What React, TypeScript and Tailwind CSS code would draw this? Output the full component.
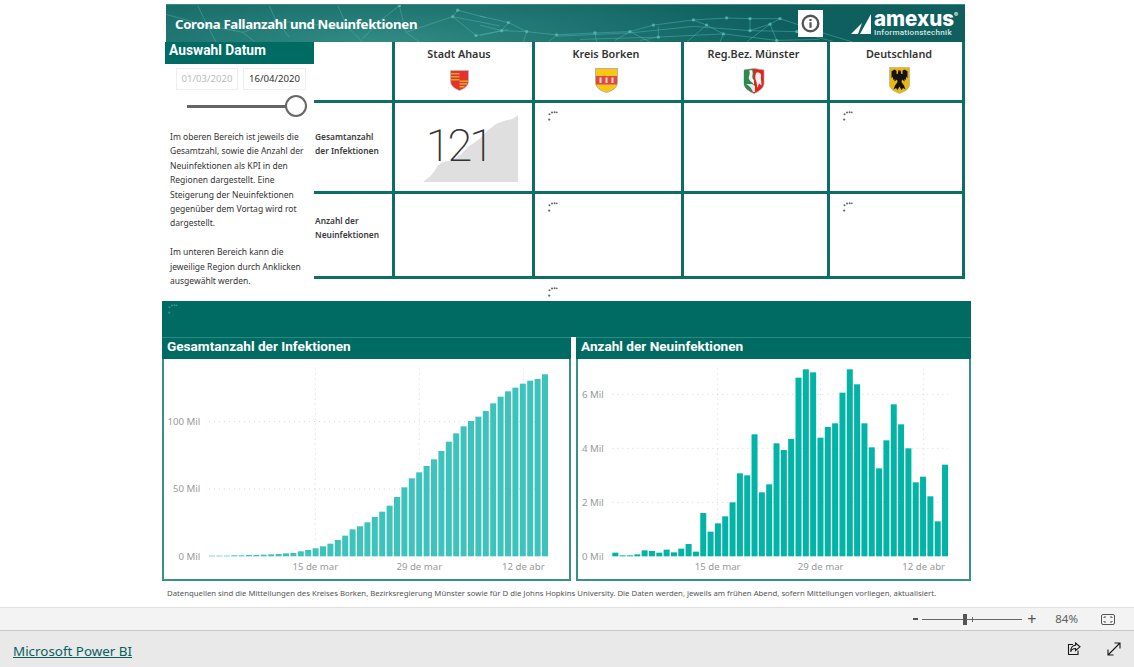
const TEAL = "#006b63";

// tops of the bars as read off the reference, baseline is 679 in the same units
const totalTops = [
  677, 677, 677, 676, 676, 675, 675, 674, 673, 672, 670, 669, 664, 660, 655, 649, 641, 630, 617, 598, 589, 577, 561,
  545, 527, 501, 472, 445, 427, 408, 388, 363, 335, 310, 289, 273, 260, 243, 220, 200, 184, 173, 161, 152, 147, 133,
];
const newTops = [
  668, 676, 676, 673, 661, 663, 668, 659, 667, 656, 642, 665, 549, 605, 580, 559, 517, 430, 436, 313, 487, 463, 340,
  360, 327, 143, 118, 127, 323, 291, 280, 188, 118, 163, 280, 352, 415, 331, 223, 283, 355, 457, 440, 499, 574, 404,
];

const networkLines = [
  "95,8 125,70 0,35",
  "125,70 230,90 330,55 310,8",
  "330,55 370,105",
  "125,70 150,120",
  "230,90 265,118",
  "515,8 545,75 590,120",
  "545,75 330,55",
  "700,8 635,60 590,110",
  "700,8 720,90 860,42 875,22 960,45",
  "860,42 930,100 1027,82",
  "860,42 1000,70",
  "720,90 760,120",
  "942,40 1027,60 1082,88 1172,98 1287,92 1392,88 1462,68 1582,52 1682,46 1752,48 1842,48 1892,65 1980,95 2060,120",
  "942,68 1007,85 1082,88",
  "1007,85 1027,60",
  "1007,85 942,100",
  "1082,88 1072,120",
  "1172,98 1147,120",
  "1287,92 1292,120",
  "1392,88 1452,120",
  "1392,88 1347,115",
  "1477,72 1477,105 1422,115",
  "1622,68 1562,120",
  "1622,68 1672,95 1662,120",
  "1752,48 1752,85 1812,65 1742,120",
  "1812,65 1832,115",
  "1842,48 1812,65",
  "1622,68 1582,52",
  "1172,102 1392,92 1582,72 1752,85 1892,88 2000,118",
  "1242,112 1477,105 1672,95 1832,115 1960,112",
];
const networkDots = [
  [125, 70], [330, 55], [545, 75], [700, 8], [860, 42], [875, 22], [930, 100], [1027, 60], [1007, 85], [1082, 88],
  [1172, 98], [1287, 92], [1392, 88], [1462, 68], [1477, 105], [1582, 52], [1622, 68], [1682, 46], [1672, 95],
  [1752, 85], [1752, 48], [1812, 65], [1842, 48], [1892, 88], [1832, 115],
];

const Network = () => (
  <svg className="absolute inset-0 w-full h-full" viewBox="0 6 2397 114" preserveAspectRatio="none" fill="none">
    {networkLines.map((pts) => (
      <polyline key={pts} points={pts} stroke="#4fb5ae" strokeOpacity="0.6" strokeWidth="2.5" />
    ))}
    {networkDots.map(([x, y]) => (
      <circle key={x + "-" + y} cx={x} cy={y} r="5" fill="#5fbdb6" fillOpacity="0.75" />
    ))}
  </svg>
);

const Logo = () => (
  <div className="flex items-center gap-[2px] mr-[7px]">
    <svg width="21" height="21" viewBox="0 0 21 21" className="mt-[2px]">
      <polygon points="0,20 11,9 7,20" fill="#fff" />
      <polygon points="9,20 20,0 20,20" fill="#fff" />
    </svg>
    <div className="flex flex-col text-white font-['Inter',sans-serif]">
      <div className="flex items-start h-[15px]">
        <span className="text-[20.5px] font-extrabold leading-[15px]">amexus</span>
        <span className="text-[6px] font-bold leading-[7px]">®</span>
      </div>
      <span className="text-[8.1px] font-medium leading-[9px] mt-[2px] text-[#d5e6e4] font-['Roboto',sans-serif] tracking-[0.25px]">
        Informationstechnik
      </span>
    </div>
  </div>
);

const InfoBox = () => (
  <div className="w-[25px] h-[27px] bg-white flex items-center justify-center">
    <svg width="19" height="19" viewBox="0 0 19 19" fill="none">
      <circle cx="9.5" cy="9.5" r="7.8" stroke="#555" strokeWidth="2.4" />
      <rect x="8.4" y="8.2" width="2.2" height="5.6" fill="#555" />
      <rect x="8.4" y="5" width="2.2" height="2" fill="#555" />
    </svg>
  </div>
);

const Dots = ({ color = "#666" }: { color?: string }) => (
  <svg width="10" height="10" viewBox="0 0 10 10" fill={color}>
    <circle cx="1.2" cy="8.6" r="1.1" />
    <circle cx="1.5" cy="3.2" r="1" />
    <circle cx="4" cy="1.5" r="1" />
    <circle cx="6.6" cy="1.3" r="1" />
    <circle cx="8.8" cy="1.3" r="0.9" />
  </svg>
);

const AhausShield = () => (
  <svg width="19" height="21" viewBox="0 0 19 21">
    <path d="M0.5 0.5H18.5V11C18.5 16 14 19 9.5 20.5C5 19 0.5 16 0.5 11Z" fill="#e3342b" stroke="#bbb" strokeWidth="0.7" />
    <rect x="1" y="3" width="8.5" height="1.5" fill="#d9a12b" />
    <rect x="1" y="6" width="8.5" height="1.5" fill="#d9a12b" />
    <rect x="1" y="9" width="8.5" height="1.5" fill="#d9a12b" />
    <rect x="9.5" y="10.5" width="8.5" height="1.4" fill="#e2b52d" />
    <rect x="9.5" y="13.2" width="7.5" height="1.4" fill="#e2b52d" />
    <rect x="9.5" y="16" width="5" height="1.4" fill="#e2b52d" />
  </svg>
);

const BorkenShield = () => (
  <svg width="23" height="25" viewBox="0 0 23 25">
    <path d="M0.5 0.5H22.5V14C22.5 20 17 23 11.5 24.5C6 23 0.5 20 0.5 14Z" fill="#fbc712" stroke="#999" strokeWidth="0.7" />
    <rect x="1" y="8" width="21" height="8.5" fill="#dc4a44" />
    <rect x="4.5" y="9.5" width="2" height="5.5" fill="#f2d6cf" />
    <rect x="10.5" y="9.5" width="2" height="5.5" fill="#f2d6cf" />
    <rect x="16.5" y="9.5" width="2" height="5.5" fill="#f2d6cf" />
  </svg>
);

const NrwShield = () => (
  <svg width="22" height="26" viewBox="0 0 22 26">
    <path d="M1 2L11 0.5L21 2V15C21 20 16 23.5 11 25.5C6 23.5 1 20 1 15Z" fill="#e2231a" stroke="#aaa" strokeWidth="0.7" />
    <path d="M1 2L10.5 1V18L9 24C5 22.5 1 19.5 1 15Z" fill="#2b8a4e" />
    <path d="M6 2.5C8 6 5 8 6 11C7 14 10 14 11 17V12C9.5 11 9 9.5 9.5 7C10 5 9.5 3 9 2Z" fill="#f1f1f1" />
    <path d="M3 16C5 17 8 19 10 24H12V18L9 16Z" fill="#e8e8e8" />
    <path d="M13 5C16 3.5 19 6 18 9C17.5 11 18.5 13 18.5 17.5L16 15.5L14.5 20L13.5 14C12 11 12 8 13 5Z" fill="#f1f1f1" />
  </svg>
);

const GermanyShield = () => (
  <svg width="21" height="27" viewBox="0 0 21 27">
    <path d="M0.5 0.5H20.5V18C20.5 22 15 25 10.5 26.5C6 25 0.5 22 0.5 18Z" fill="#e9b80e" stroke="#aaa" strokeWidth="0.6" />
    <path
      d="M9.3 3.5H11.7L12.3 7H13.5V3.8L15.5 2.6L18.5 4.2V11L17 10V13L15.5 12V14.5L13 12.5L12.5 15L15 18.5L16.5 22.5L14 21L12.5 23L10.5 19.5L8.5 23L7 21L4.5 22.5L6 18.5L8.5 15L8 12.5L5.5 14.5V12L4 13V10L2.5 11V4.2L5.5 2.6L7.5 3.8V7H8.7Z"
      fill="#141414"
    />
    <rect x="9.4" y="3" width="1.2" height="1.4" fill="#c8281e" />
  </svg>
);

type BarChartProps = {
  tops: number[];
  viewBox: string;
  width: number;
  color: string;
  x0: number;
  pitch: number;
  yTicks: { label: string; y: number }[];
  xTicks: { label: string; x: number }[];
  labelRight: number;
  gridRight: number;
};

const BarChart = ({ tops, viewBox, width, color, x0, pitch, yTicks, xTicks, labelRight, gridRight }: BarChartProps) => (
  <svg width={width} height="220" viewBox={viewBox} fontFamily="'Noto Sans', sans-serif" fontSize="29">
    {yTicks.map((t) => (
      <g key={t.label}>
        {t.y !== 679 && <line x1={x0} x2={gridRight} y1={t.y} y2={t.y} stroke="#ccc" strokeWidth="2.5" strokeDasharray="3 12" />}
        <text x={labelRight} y={t.y + 10} textAnchor="end" fill="#999">
          {t.label}
        </text>
      </g>
    ))}
    {xTicks.map((t) => (
      <g key={t.label}>
        <line x1={t.x} x2={t.x} y1="116" y2="679" stroke="#ccc" strokeWidth="2.5" strokeDasharray="3 12" />
        <text x={t.x} y="720" textAnchor="middle" fill="#999">
          {t.label}
        </text>
      </g>
    ))}
    {tops.map((top, i) => (
      <rect key={i} x={x0 + i * pitch} y={top} width="18" height={679 - top} fill={color} />
    ))}
  </svg>
);

const Cell = ({ children, className = "" }: { children?: React.ReactNode; className?: string }) => (
  <div className={"border-r-[3px] border-b-[3px] border-[#0d6e68] " + className}>{children}</div>
);

const HeadCell = ({ name, children, className = "" }: { name: string; children: React.ReactNode; className?: string }) => (
  <Cell className={"flex flex-col items-center " + className}>
    <span className="mt-[4px] text-[10.8px] leading-[16px] font-semibold text-[#333]">{name}</span>
    <div className="mt-[5px] h-[27px] flex items-center">{children}</div>
  </Cell>
);

const RowLabel = ({ children, className = "" }: { children: React.ReactNode; className?: string }) => (
  <Cell className={"flex items-center pl-[1px] text-[8.4px] leading-[14px] font-semibold text-[#3a3a3a] " + className}>
    <div>{children}</div>
  </Cell>
);

const DotCell = () => (
  <Cell className="pl-[13px] pt-[8px]">
    <Dots />
  </Cell>
);

const App = () => {
  return (
    <div className="w-full h-[667px] flex flex-col bg-white font-['Noto_Sans',sans-serif] overflow-hidden">
      <div className="h-[607px] w-[810px] mx-auto pt-[4px] flex flex-col shrink-0">
        {/* BANNER */}
        <div className="relative ml-[4px] w-[799px] h-[38px] shrink-0 overflow-hidden bg-[radial-gradient(ellipse_420px_70px_at_210px_100%,#318b84_0%,#0e5f5e_100%)] border-t border-[#3d8a85]">
          <Network />
          <div className="relative h-full flex items-center">
            <h1 className="ml-[9px] mt-[2px] text-[13.2px] tracking-[-0.3px] font-bold text-white whitespace-nowrap">
              Corona Fallanzahl und Neuinfektionen
            </h1>
            <div className="ml-auto flex items-center">
              <div className="mr-[28px]">
                <InfoBox />
              </div>
              <Logo />
            </div>
          </div>
        </div>

        <div className="flex h-[259px] shrink-0">
          {/* DATE SLICER */}
          <div className="ml-[3px] w-[149px] shrink-0">
            <div className="h-[22px] bg-[#006b63] pl-[4px] text-[13.8px] leading-[17px] font-bold text-white font-['Roboto',sans-serif]">
              Auswahl Datum
            </div>
            <div className="mt-[4px] ml-[11px] flex gap-[5px] text-[9.6px] leading-[20px] text-center">
              <div className="w-[62px] h-[22px] border border-[#eee] text-[#bbb]">01/03/2020</div>
              <div className="w-[63px] h-[22px] border border-[#eee] text-[#333]">16/04/2020</div>
            </div>
            <div className="mt-[5px] ml-[22px] w-[120px] h-[22px] flex items-center">
              <div className="flex-1 h-[3px] bg-[#666]" />
              <div className="w-[22px] h-[22px] rounded-full border-[2.5px] border-[#666] bg-white -ml-[1px]" />
            </div>
            <p className="mt-[13px] ml-[5px] text-[8.5px] leading-[14.4px] text-[#333] whitespace-nowrap">
              Im oberen Bereich ist jeweils die
              <br />
              Gesamtzahl, sowie die Anzahl der
              <br />
              Neuinfektionen als KPI in den
              <br />
              Regionen dargestellt. Eine
              <br />
              Steigerung der Neuinfektionen
              <br />
              gegenüber dem Vortag wird rot
              <br />
              dargestellt.
              <br />
              <br />
              Im unteren Bereich kann die
              <br />
              jeweilige Region durch Anklicken
              <br />
              ausgewählt werden.
            </p>
          </div>

          <div className="flex flex-col">
            {/* KPI GRID */}
            <div className="grid grid-cols-[81px_140px_149px_146px_135px] grid-rows-[61px_91px_85px]">
              <Cell />
              <HeadCell name="Stadt Ahaus" className="pr-[9px]">
                <AhausShield />
              </HeadCell>
              <HeadCell name="Kreis Borken" className="pr-[4px]">
                <BorkenShield />
              </HeadCell>
              <HeadCell name="Reg.Bez. Münster" className="pr-[4px]">
                <NrwShield />
              </HeadCell>
              <HeadCell name="Deutschland" className="pl-[6px]">
                <GermanyShield />
              </HeadCell>

              <RowLabel className="pb-[6px]">
                Gesamtanzahl
                <br />
                der Infektionen
              </RowLabel>
              <Cell className="relative flex items-center justify-center pr-[10px] pb-[3px]">
                <svg className="absolute left-[28px] top-[12px]" width="95" height="67" viewBox="0 0 285 201" fill="#dfdfdf">
                  <polygon points="0,201 10,193 22,184 36,166 45,151 60,141 90,136 115,116 135,96 170,71 195,46 220,26 250,16 270,11 285,0 285,201" />
                </svg>
                <span className="relative text-[45px] leading-none font-extralight tracking-[-3px] text-[#333] font-['Roboto',sans-serif]">121</span>
              </Cell>
              <DotCell />
              <Cell />
              <DotCell />

              <RowLabel className="pb-[14px]">
                Anzahl der
                <br />
                Neuinfektionen
              </RowLabel>
              <Cell />
              <DotCell />
              <Cell />
              <DotCell />
            </div>
            <div className="pl-[234px] pt-[8px] leading-none">
              <Dots />
            </div>
          </div>
        </div>

        {/* BAND */}
        <div className="w-[809px] h-[36px] shrink-0 pl-[6px] pt-[3px] leading-none" style={{ backgroundColor: TEAL }}>
          <Dots color="#3f8f88" />
        </div>

        {/* CHARTS */}
        <div className="flex gap-[5px] h-[244px] shrink-0">
          <div className="w-[409px] flex flex-col">
            <div className="h-[22px] bg-[#006b63] border-t border-[#2a8a83] pl-[5px] text-[13.6px] leading-[17px] font-bold text-white font-['Roboto',sans-serif]">
              Gesamtanzahl der Infektionen
            </div>
            <div className="flex-1 border-2 border-t-0 border-[#3a9189]">
              <BarChart
                tops={totalTops}
                viewBox="12 87 1215 660"
                width={405}
                color="#3cc4bc"
                x0={147}
                pitch={22.2}
                labelRight={121}
                gridRight={1165}
                yTicks={[
                  { label: "100 Mil", y: 275 },
                  { label: "50 Mil", y: 477 },
                  { label: "0 Mil", y: 679 },
                ]}
                xTicks={[
                  { label: "15 de mar", x: 466 },
                  { label: "29 de mar", x: 778 },
                  { label: "12 de abr", x: 1090 },
                ]}
              />
            </div>
          </div>
          <div className="w-[395px] flex flex-col">
            <div className="h-[22px] bg-[#006b63] border-t border-[#2a8a83] pl-[5px] text-[13.6px] leading-[17px] font-bold text-white font-['Roboto',sans-serif]">
              Anzahl der Neuinfektionen
            </div>
            <div className="flex-1 border-2 border-t-0 border-[#3a9189]">
              <BarChart
                tops={newTops}
                viewBox="24 87 1173 660"
                width={391}
                color="#01b4a6"
                x0={127}
                pitch={21.98}
                labelRight={101}
                gridRight={1134}
                yTicks={[
                  { label: "6 Mil", y: 193 },
                  { label: "4 Mil", y: 355 },
                  { label: "2 Mil", y: 517 },
                  { label: "0 Mil", y: 679 },
                ]}
                xTicks={[
                  { label: "15 de mar", x: 443 },
                  { label: "29 de mar", x: 752 },
                  { label: "12 de abr", x: 1061 },
                ]}
              />
            </div>
          </div>
        </div>

        {/* SOURCE NOTE */}
        <p className="ml-[5px] mt-[6px] text-[7.75px] leading-[12px] text-[#555] whitespace-nowrap">
          Datenquellen sind die Mitteilungen des Kreises Borken, Bezirksregierung Münster sowie für D die Johns Hopkins
          University. Die Daten werden, jeweils am frühen Abend, sofern Mitteilungen vorliegen, aktualisiert.
        </p>
      </div>

      {/* ZOOM BAR */}
      <div className="h-[24px] shrink-0 bg-[#f3f3f3] border-t border-b border-t-[#e0e0e0] border-b-[#c8c8c8] flex items-center justify-end text-[#605e5c]">
        <span className="w-[5px] h-[2px] bg-[#555]" />
        <div className="relative w-[100px] h-[1px] bg-[#666] ml-[4px]">
          <span className="absolute left-[41px] -top-[5px] w-[4px] h-[11px] bg-[#555]" />
          <span className="absolute left-[50px] -top-[2px] w-[1px] h-[5px] bg-[#666]" />
        </div>
        <span className="ml-[5px] text-[16px] leading-none text-[#555]">+</span>
        <span className="ml-[19px] text-[11.5px] leading-none">84%</span>
        <svg className="ml-[23px] mr-[19px]" width="14" height="11" viewBox="0 0 14 11" fill="none" stroke="#555">
          <rect x="0.5" y="0.5" width="13" height="10" rx="1.5" />
          <path d="M3 4V3H5M9 3H11V4M11 7V8H9M5 8H3V7" />
        </svg>
      </div>

      {/* FOOTER */}
      <div className="flex-1 bg-[#e9e9e9] flex items-center">
        <a href="#" className="ml-[13px] mt-[3px] text-[13.4px] leading-[18px] text-[#0b5e5e] underline whitespace-nowrap">
          Microsoft Power BI
        </a>
        <svg className="ml-auto" width="14" height="14" viewBox="0 0 14 14" fill="none" stroke="#1a1a1a" strokeWidth="1.1">
          <path d="M6 2.5H1.5V12.5H11V8.5" />
          <path d="M8.5 1L13 4.8L8.5 8.5V6.5C6 6.5 4.5 7.5 3.7 9.7C3.7 6 5.5 3.5 8.5 3.3Z" />
        </svg>
        <svg className="ml-[26px] mr-[13px]" width="14" height="14" viewBox="0 0 14 14" fill="none" stroke="#1a1a1a" strokeWidth="1.1">
          <path d="M1 13L13 1M7.5 1H13V6.5M1 7.5V13H6.5" />
        </svg>
      </div>
    </div>
  );
};

export default App;
